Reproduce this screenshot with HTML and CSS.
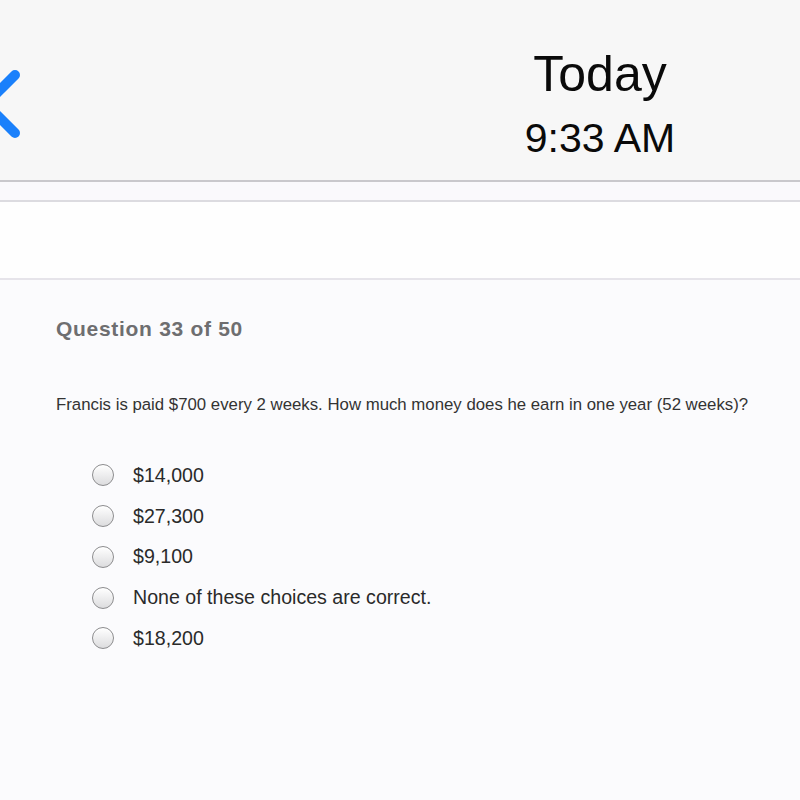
FILE: index.html
```html
<!DOCTYPE html>
<html>
<head>
<meta charset="utf-8">
<link rel="stylesheet" href="styles.css">
</head>
<body>
<div class="page">
  <header class="topbar">
    <svg class="back" width="30" height="80" viewBox="0 0 30 80">
      <path d="M15 10 L-14 39 L15 68" fill="none" stroke="#1a80fb" stroke-width="10" stroke-linecap="round" stroke-linejoin="round"/>
    </svg>
    <div class="titles">
      <div class="day">Today</div>
      <div class="time">9:33 AM</div>
    </div>
  </header>
  <div class="band"></div>
  <div class="blank"></div>
  <main class="content">
    <h1 class="qnum">Question 33 of 50</h1>
    <p class="qtext">Francis is paid $700 every 2 weeks. How much money does he earn in one year (52 weeks)?</p>
    <ul class="options">
      <li class="option"><span class="radio"></span><span class="label">$14,000</span></li>
      <li class="option"><span class="radio"></span><span class="label">$27,300</span></li>
      <li class="option"><span class="radio"></span><span class="label">$9,100</span></li>
      <li class="option"><span class="radio"></span><span class="label">None of these choices are correct.</span></li>
      <li class="option"><span class="radio"></span><span class="label">$18,200</span></li>
    </ul>
  </main>
</div>
</body>
</html>
```

FILE: styles.css
```css
html, body {
  margin: 0;
  padding: 0;
  background: #fbfbfd;
}
.page {
  width: 800px;
  height: 800px;
  overflow: hidden;
  font-family: "Liberation Sans", Arial, sans-serif;
  background: #fbfbfd;
}
.topbar {
  height: 182px;
  box-sizing: border-box;
  padding-top: 49px;
  display: flex;
  align-items: flex-start;
  background: #f7f7f7;
  border-bottom: 2px solid #c9c8cc;
}
.back {
  display: block;
  margin-top: 16px;
  flex: none;
}
.titles {
  width: 240px;
  margin-left: 450px;
  text-align: center;
  color: #0a0a0a;
}
.day {
  font-size: 50px;
  line-height: 50px;
}
.time {
  margin-top: 19px;
  font-size: 41px;
  line-height: 40px;
}
.band {
  height: 18px;
  background: #faf9fc;
  border-bottom: 2px solid #dcdbe0;
}
.blank {
  height: 76px;
  background: #fefefe;
  border-bottom: 2px solid #e6e4ea;
}
.content {
  padding: 38px 0 0 56px;
}
.qnum {
  margin: 0;
  font-size: 21px;
  line-height: 21px;
  font-weight: 700;
  letter-spacing: 0.7px;
  color: #6e6e70;
}
.qtext {
  margin: 58px 0 0;
  font-size: 16.8px;
  line-height: 16px;
  color: #333;
}
.options {
  list-style: none;
  margin: 42px 0 0;
  padding: 0 0 0 36px;
}
.option {
  height: 40.75px;
  display: flex;
  align-items: center;
}
.radio {
  width: 20px;
  height: 20px;
  border-radius: 50%;
  border: 1.5px solid #8c8c8e;
  background: linear-gradient(#ffffff, #dcdcde);
  box-shadow: inset 0 1px 1px rgba(255,255,255,0.9);
  flex: none;
}
.label {
  margin-left: 19px;
  font-size: 19.6px;
  line-height: 19px;
  color: #2a2a2a;
}
```
